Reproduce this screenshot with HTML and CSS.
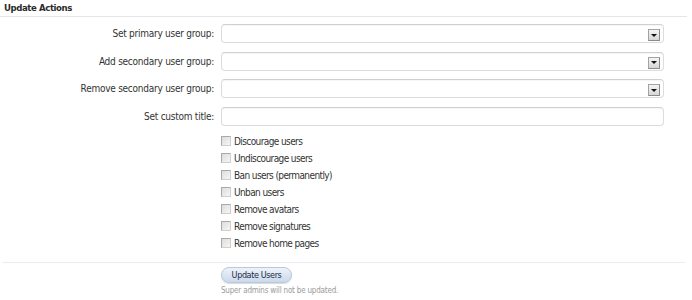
FILE: index.html
```html
<!DOCTYPE html>
<html>
<head>
<meta charset="utf-8">
<link rel="stylesheet" href="styles.css">
</head>
<body>
<div class="panel">
  <h3 class="heading">Update Actions</h3>
  <div class="form">
    <label class="lbl">Set primary user group:</label>
    <div class="select"><span class="arrow"></span></div>
    <label class="lbl">Add secondary user group:</label>
    <div class="select"><span class="arrow"></span></div>
    <label class="lbl">Remove secondary user group:</label>
    <div class="select"><span class="arrow"></span></div>
    <label class="lbl">Set custom title:</label>
    <input class="text" type="text">
    <span></span>
    <ul class="checks">
      <li><input type="checkbox" class="cb"><span>Discourage users</span></li>
      <li><input type="checkbox" class="cb"><span>Undiscourage users</span></li>
      <li><input type="checkbox" class="cb"><span>Ban users (permanently)</span></li>
      <li><input type="checkbox" class="cb"><span>Unban users</span></li>
      <li><input type="checkbox" class="cb"><span>Remove avatars</span></li>
      <li><input type="checkbox" class="cb"><span>Remove signatures</span></li>
      <li><input type="checkbox" class="cb"><span>Remove home pages</span></li>
    </ul>
  </div>
  <div class="submit">
    <span></span>
    <div class="submit-col">
      <button class="btn" type="button">Update Users</button>
      <p class="hint">Super admins will not be updated.</p>
    </div>
  </div>
</div>
</body>
</html>
```

FILE: styles.css
```css
html, body {
  margin: 0;
  padding: 0;
  background: #ffffff;
}
body {
  font-family: "DejaVu Sans Condensed", "DejaVu Sans", sans-serif;
  font-size: 10px;
  letter-spacing: -0.25px;
  color: #333333;
}
.panel {
  width: 687px;
}
.heading {
  margin: 0;
  padding: 2px 4px 2px;
  line-height: 12px;
  font-size: 9.5px;
  font-weight: bold;
  letter-spacing: -0.4px;
  color: #2a2a2a;
  border-bottom: 1px solid #e6e6ea;
}
.form {
  display: grid;
  grid-template-columns: 214px 443px;
  column-gap: 7px;
  row-gap: 8.67px;
  padding-top: 7px;
}
.lbl {
  display: flex;
  align-items: center;
  justify-content: flex-end;
  height: 19px;
  color: #333333;
}
.select, .text {
  box-sizing: border-box;
  height: 19px;
  width: 443px;
  margin: 0;
  border: 1px solid #dcdcdc;
  border-top-color: #cfcfcf;
  border-radius: 4px;
  background: #ffffff;
  box-shadow: inset 0 1px 1px rgba(0,0,0,0.04);
}
.select {
  display: flex;
  align-items: center;
  justify-content: flex-end;
  padding: 3px 3px 0 0;
}
.arrow {
  box-sizing: border-box;
  width: 12px;
  height: 12px;
  border: 1px solid #a3a3a3;
  border-right-color: #8a8a8a;
  border-bottom-color: #8a8a8a;
  background: linear-gradient(#f4f4f4, #d6d6d6);
  display: flex;
  align-items: center;
  justify-content: center;
}
.arrow::after {
  content: "";
  width: 0;
  height: 0;
  border-left: 3px solid transparent;
  border-right: 3px solid transparent;
  border-top: 3px solid #111111;
}
.text {
  padding: 0 4px;
  outline: none;
}
.checks {
  list-style: none;
  margin: -1.67px 0 0 0;
  padding: 0;
  letter-spacing: -0.6px;
}
.checks li {
  display: flex;
  align-items: center;
  height: 17px;
}
.cb {
  appearance: none;
  -webkit-appearance: none;
  box-sizing: border-box;
  width: 10px;
  height: 10px;
  margin: 0 3px 0 0;
  border: 1px solid #a9a9a9;
  border-right-color: #cfcfcf;
  border-bottom-color: #cfcfcf;
  background: linear-gradient(135deg, #dcdcdc, #f6f6f6);
}
.submit {
  display: grid;
  grid-template-columns: 214px 443px;
  column-gap: 7px;
  margin: 10px 2px 0 2px;
  width: 683px;
  border-top: 1px solid #ececf0;
  padding-top: 4px;
}
.submit > span {
  margin-left: -2px;
}
.submit-col {
  margin-left: -2px;
}
.btn {
  box-sizing: border-box;
  width: 71px;
  height: 16px;
  padding: 0;
  margin: 0;
  border: 1px solid #b7c9de;
  border-radius: 8px;
  background: linear-gradient(#eef3fa, #c9d9ec);
  box-shadow: 0 1px 1px rgba(0,0,0,0.15);
  font-family: "DejaVu Sans Condensed", "DejaVu Sans", sans-serif;
  font-size: 9px;
  letter-spacing: -0.4px;
  color: #1d2b3f;
  line-height: 14px;
}
.hint {
  margin: 3px 0 0 0;
  font-size: 8px;
  line-height: 10px;
  letter-spacing: -0.2px;
  color: #9a9a9a;
}
```
